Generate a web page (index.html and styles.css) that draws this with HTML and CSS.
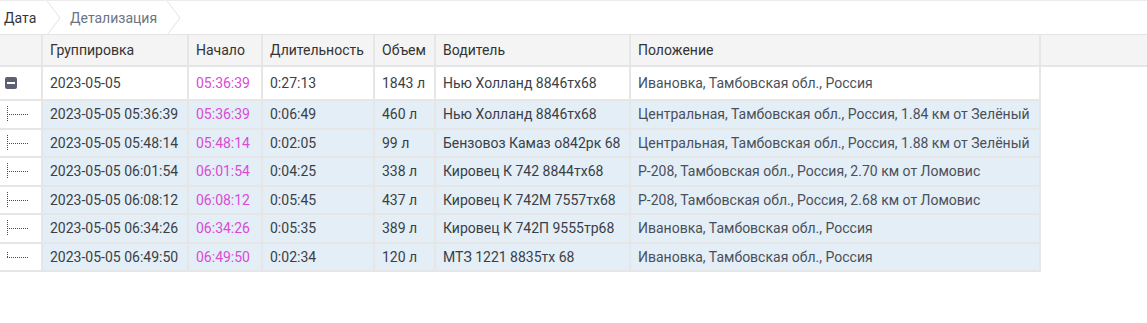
FILE: index.html
```html
<!DOCTYPE html>
<html lang="ru">
<head>
<meta charset="utf-8">
<link rel="stylesheet" href="styles.css">
</head>
<body>
<div class="crumbs">
  <span class="crumb first">Дата</span>
  <span class="sep"><svg width="14" height="34" viewBox="0 0 14 34"><polyline points="0,0 13,17 0,34" fill="none" stroke="#e2e2e2" stroke-width="1"/></svg></span>
  <span class="crumb second">Детализация</span>
  <span class="sep"><svg width="14" height="34" viewBox="0 0 14 34"><polyline points="0,0 13,17 0,34" fill="none" stroke="#e2e2e2" stroke-width="1"/></svg></span>
</div>
<table class="grid">
  <colgroup>
    <col class="c-tree"><col class="c-grp"><col class="c-start"><col class="c-dur"><col class="c-vol"><col class="c-drv"><col class="c-loc"><col class="c-fill">
  </colgroup>
  <thead>
    <tr>
      <th></th><th>Группировка</th><th>Начало</th><th>Длительность</th><th>Объем</th><th>Водитель</th><th>Положение</th><th class="fill"></th>
    </tr>
  </thead>
  <tbody>
    <tr class="group">
      <td class="tree"><span class="minus"></span></td>
      <td>2023-05-05</td><td class="time">05:36:39</td><td>0:27:13</td><td>1843 л</td><td>Нью Холланд 8846тх68</td><td class="loc">Ивановка, Тамбовская обл., Россия</td><td class="fill"></td>
    </tr>
    <tr class="child">
      <td class="tree"><span class="branch"></span></td>
      <td>2023-05-05 05:36:39</td><td class="time">05:36:39</td><td>0:06:49</td><td>460 л</td><td>Нью Холланд 8846тх68</td><td class="loc">Центральная, Тамбовская обл., Россия, 1.84 км от Зелёный</td><td class="fill"></td>
    </tr>
    <tr class="child">
      <td class="tree"><span class="branch"></span></td>
      <td>2023-05-05 05:48:14</td><td class="time">05:48:14</td><td>0:02:05</td><td>99 л</td><td>Бензовоз Камаз о842рк 68</td><td class="loc">Центральная, Тамбовская обл., Россия, 1.88 км от Зелёный</td><td class="fill"></td>
    </tr>
    <tr class="child">
      <td class="tree"><span class="branch"></span></td>
      <td>2023-05-05 06:01:54</td><td class="time">06:01:54</td><td>0:04:25</td><td>338 л</td><td>Кировец К 742 8844тх68</td><td class="loc">Р-208, Тамбовская обл., Россия, 2.70 км от Ломовис</td><td class="fill"></td>
    </tr>
    <tr class="child">
      <td class="tree"><span class="branch"></span></td>
      <td>2023-05-05 06:08:12</td><td class="time">06:08:12</td><td>0:05:45</td><td>437 л</td><td>Кировец К 742М 7557тх68</td><td class="loc">Р-208, Тамбовская обл., Россия, 2.68 км от Ломовис</td><td class="fill"></td>
    </tr>
    <tr class="child">
      <td class="tree"><span class="branch"></span></td>
      <td>2023-05-05 06:34:26</td><td class="time">06:34:26</td><td>0:05:35</td><td>389 л</td><td>Кировец К 742П 9555тр68</td><td class="loc">Ивановка, Тамбовская обл., Россия</td><td class="fill"></td>
    </tr>
    <tr class="child">
      <td class="tree"><span class="branch last"></span></td>
      <td>2023-05-05 06:49:50</td><td class="time">06:49:50</td><td>0:02:34</td><td>120 л</td><td>МТЗ 1221 8835тх 68</td><td class="loc">Ивановка, Тамбовская обл., Россия</td><td class="fill"></td>
    </tr>
  </tbody>
</table>
</body>
</html>
```
FILE: styles.css
```css
html, body {
  margin: 0;
  padding: 0;
  background: #ffffff;
}
body {
  font-family: Roboto, "Liberation Sans", Arial, sans-serif;
  font-size: 14px;
  color: #333333;
}
.crumbs {
  display: flex;
  align-items: stretch;
  border-top: 1px solid #ececec;
  border-bottom: 1px solid #e4e4e4;
  box-sizing: border-box;
  height: 35px;
}
.crumb {
  display: flex;
  align-items: center;
  font-size: 14px;
}
.crumb.first {
  padding-left: 4px;
  width: 43px;
  color: #2f3640;
}
.crumb.second {
  padding-left: 9px;
  padding-right: 10px;
  color: #6b7583;
}
.sep {
  display: flex;
  align-items: center;
}
.sep svg {
  display: block;
}
.grid {
  border-collapse: collapse;
  table-layout: fixed;
  width: 100%;
}
.c-tree { width: 42px; }
.c-grp { width: 146px; }
.c-start { width: 74px; }
.c-dur { width: 112px; }
.c-vol { width: 61px; }
.c-drv { width: 195px; }
.c-loc { width: 410px; }
.grid th {
  background: #f4f4f4;
  height: 30px;
  padding: 0 0 0 7px;
  text-align: left;
  font-weight: normal;
  color: #333333;
  border-right: 2px solid #e6e6e6;
  border-bottom: 2px solid #e6e6e6;
  white-space: nowrap;
  overflow: hidden;
}
.grid th.fill {
  border-right: none;
}
.grid td {
  padding: 0 0 0 7px;
  white-space: nowrap;
  overflow: hidden;
  border-right: 2px solid #e6e6e6;
  border-bottom: 2px solid #e6e6e6;
  color: #3a3f47;
}
.grid td.fill {
  border: none;
  background: #ffffff;
}
.group td {
  height: 32px;
  background: #ffffff;
}
.child td {
  height: 26.5px;
  background: #e4eef6;
}
.child td.tree {
  background: #ffffff;
}
.grid td.tree {
  padding: 0;
}
.grid td.time {
  color: #d94bd6;
}
.grid td.loc {
  color: #4a505a;
}
.minus {
  display: block;
  width: 12px;
  height: 12px;
  margin-left: 5px;
  border-radius: 2px;
  background: #5b6170;
  position: relative;
}
.minus::after {
  content: "";
  position: absolute;
  left: 2px;
  right: 2px;
  top: 5px;
  height: 2px;
  background: #ffffff;
}
.branch {
  display: block;
  width: 21px;
  height: 16px;
  margin-left: 7px;
  position: relative;
}
.branch::before {
  content: "";
  position: absolute;
  left: 0;
  top: 0;
  width: 1px;
  height: 16px;
  background: repeating-linear-gradient(to bottom, #0a5ca8 0 1px, transparent 1px 2px);
}
.branch::after {
  content: "";
  position: absolute;
  left: 0;
  top: 8px;
  width: 21px;
  height: 1px;
  background: repeating-linear-gradient(to right, #0a5ca8 0 1px, transparent 1px 2px);
}
.branch.last::before {
  top: 3px;
  height: 6px;
}
```
